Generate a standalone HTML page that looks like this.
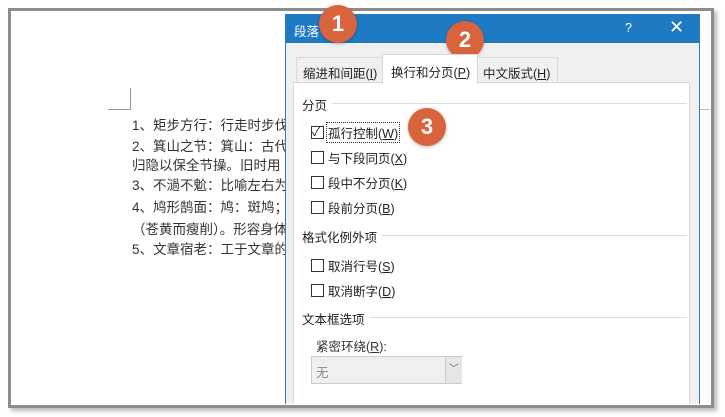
<!DOCTYPE html>
<html><head><meta charset="utf-8"><style>
body{margin:0;width:725px;height:417px;background:#fff;position:relative;overflow:hidden;font-family:"Liberation Sans","Noto Sans CJK SC",sans-serif;font-size:12.5px;color:#222}
.a{position:absolute}
.frame{left:8px;top:8px;width:700px;height:394px;border:3px solid #8d8d8d;background:#fff;box-shadow:3px 3px 4px #bbb}
.doc{left:132px;font-size:13.5px;color:#333;white-space:nowrap}
.dlg{left:285px;top:14px;width:413px;height:389px;background:#f0f0f0;border:1px solid #2a7cc0;border-bottom:none;overflow:hidden}
.title{left:0;top:0;width:413px;height:28px;background:#1f7ac4;color:#fff}
.panel{left:7px;top:67px;width:395px;height:330px;background:#fff;border:1px solid #d9d9d9}
.cb{width:11px;height:11px;border:1px solid #333;background:#fff}
.c{width:38px;height:38px;border-radius:50%;background:#d9633c;color:#fff;font-size:22px;font-weight:bold;text-align:center;line-height:38px;box-shadow:0 1px 3px rgba(0,0,0,.3)}
.hl{height:1px;background:#ddd}
u{text-decoration:underline}
</style></head><body>
<div class="a frame"></div>
<div class="a" style="left:130px;top:88px;width:1px;height:22px;background:#999"></div>
<div class="a" style="left:108px;top:109px;width:22px;height:1px;background:#999"></div>
<div class="a" style="left:698px;top:109px;width:12px;height:1px;background:#bbb"></div>
<div class="a doc" style="top:114px">1、矩步方行：行走时步伐</div>
<div class="a doc" style="top:135px">2、箕山之节：箕山：古代</div>
<div class="a doc" style="top:154px">归隐以保全节操。旧时用</div>
<div class="a doc" style="top:174px">3、不濄不魀：比喻左右为</div>
<div class="a doc" style="top:196px">4、鸠形鹄面：鸠：斑鸠；</div>
<div class="a doc" style="top:218px">（苍黄而瘦削）。形容身体</div>
<div class="a doc" style="top:238px">5、文章宿老：工于文章的</div>

<div class="a dlg">
 <div class="a title"><span class="a" style="left:8px;top:6px">段落</span><span class="a" style="left:339px;top:6px">?</span><span class="a" style="left:383px;top:2px;font-size:18px">✕</span></div>
 <div class="a" style="left:10px;top:42px;width:86px;height:25px;border:1px solid #d9d9d9;border-bottom:none;background:#f0f0f0"><span class="a" style="left:6px;top:5px">缩进和间距(<u>I</u>)</span></div>
 <div class="a" style="left:96px;top:39px;width:94px;height:29px;border:1px solid #d9d9d9;border-bottom:none;background:#fff;z-index:2"><span class="a" style="left:8px;top:7px">换行和分页(<u>P</u>)</span></div>
 <div class="a" style="left:190px;top:42px;width:80px;height:25px;border:1px solid #d9d9d9;border-bottom:none;background:#f0f0f0"><span class="a" style="left:6px;top:5px">中文版式(<u>H</u>)</span></div>
 <div class="a panel"></div>
 <span class="a" style="left:16px;top:80px">分页</span><div class="a hl" style="left:46px;top:88px;width:355px"></div>
 <div class="a cb" style="left:25px;top:111px"></div><span class="a" style="left:26px;top:108px;font-size:12px">✓</span>
 <span class="a" style="left:40px;top:107px;border:1px dotted #333;padding:0 1px">孤行控制(<u>W</u>)</span>
 <div class="a cb" style="left:25px;top:136px"></div><span class="a" style="left:42px;top:133px">与下段同页(<u>X</u>)</span>
 <div class="a cb" style="left:25px;top:161px"></div><span class="a" style="left:42px;top:158px">段中不分页(<u>K</u>)</span>
 <div class="a cb" style="left:25px;top:186px"></div><span class="a" style="left:42px;top:183px">段前分页(<u>B</u>)</span>
 <span class="a" style="left:16px;top:212px">格式化例外项</span><div class="a hl" style="left:96px;top:220px;width:305px"></div>
 <div class="a cb" style="left:25px;top:244px"></div><span class="a" style="left:42px;top:241px">取消行号(<u>S</u>)</span>
 <div class="a cb" style="left:25px;top:269px"></div><span class="a" style="left:42px;top:266px">取消断字(<u>D</u>)</span>
 <span class="a" style="left:16px;top:294px">文本框选项</span><div class="a hl" style="left:84px;top:302px;width:317px"></div>
 <span class="a" style="left:30px;top:321px;color:#333">紧密环绕(<u>R</u>):</span>
 <div class="a" style="left:25px;top:341px;width:149px;height:26px;border:1px solid #ccc;background:#efefef"><span class="a" style="left:4px;top:5px;color:#888">无</span><div class="a" style="left:133px;top:0;width:16px;height:26px;border-left:1px solid #ccc;background:#e6e6e6;color:#666;font-size:10px;text-align:center;line-height:26px">﹀</div></div>
</div>
<div class="a c" style="left:319px;top:5px">1</div>
<div class="a c" style="left:446px;top:21px">2</div>
<div class="a c" style="left:408px;top:108px">3</div>
</body></html>
